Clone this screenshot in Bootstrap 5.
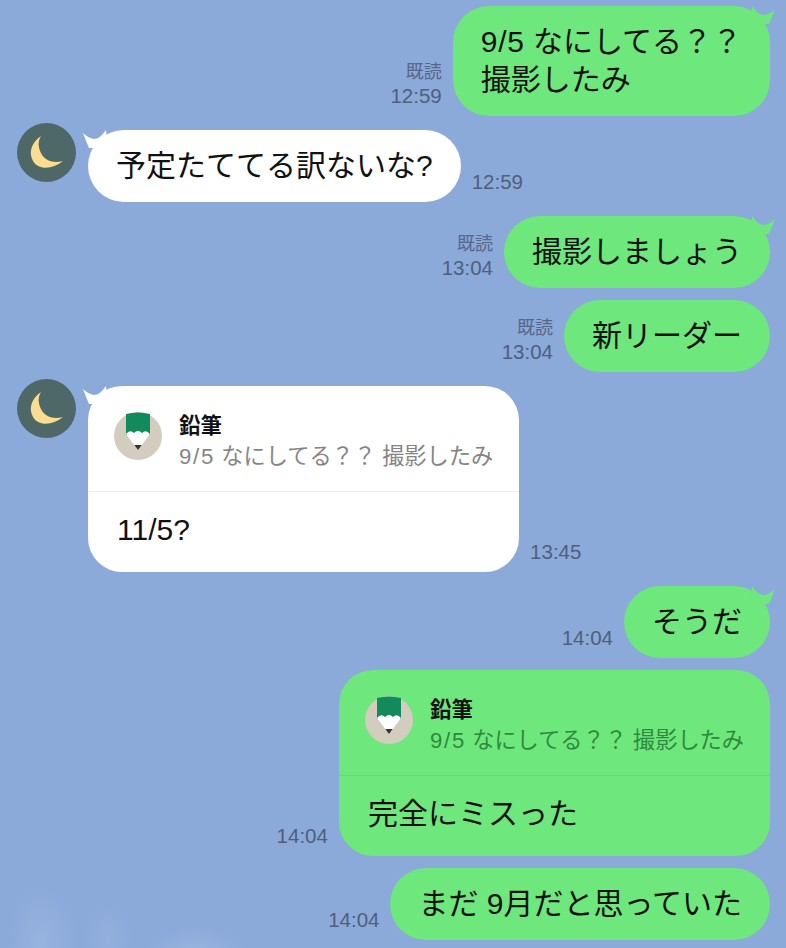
<!DOCTYPE html>
<html lang="ja">
<head>
    <meta charset="UTF-8">
    <title>トーク</title>
    <link href="https://cdn.jsdelivr.net/npm/bootstrap@5.3.3/dist/css/bootstrap.min.css" rel="stylesheet">
    <style>
        html, body {
            height: 100%;
        }
        body {
            overflow: hidden;
            font-family: "Liberation Sans", "Noto Sans CJK JP", sans-serif;
            color: #111;
            background-color: #8ba9d9;
            background-image:
                radial-gradient(ellipse 36px 62px at 42px 945px, rgba(170, 195, 232, .4), transparent),
                radial-gradient(ellipse 24px 40px at 108px 940px, rgba(170, 195, 232, .25), transparent),
                radial-gradient(ellipse 50px 26px at 196px 952px, rgba(170, 195, 232, .4), transparent);
        }
        .chat {
            padding: 6px 16px 0 17px;
        }
        .gap-m { margin-top: 14px; }
        .gap-s { margin-top: 12px; }
        .bubble {
            position: relative;
            padding: 17px 28px;
            border-radius: 36px;
            font-size: 30px;
            line-height: 38px;
            white-space: nowrap;
        }
        .bubble-me { background: #6ee77c; }
        .bubble-them { background: #fff; }
        .num { letter-spacing: .7px; }
        .tail {
            position: absolute;
            top: 0;
            width: 26px;
            height: 22px;
        }
        .bubble-me .tail { right: -6px; fill: #6ee77c; }
        .bubble-them .tail { left: -6px; fill: #fff; }
        .avatar {
            flex: none;
            width: 59px;
            height: 59px;
            margin-top: -7px;
            margin-right: 12px;
        }
        .meta {
            font-size: 20.5px;
            line-height: 24px;
            color: #4f607c;
            text-align: right;
            margin-bottom: 8px;
            white-space: nowrap;
        }
        .meta-left { margin-right: 11px; }
        .meta-right { margin-left: 11px; }
        .seen { font-size: 18px; color: #56678a; }
        .reply-card { padding: 0; border-radius: 34px; }
        .reply-head {
            padding: 26px 26px 0;
            height: 106px;
            border-bottom: 1px solid #eeeeee;
        }
        .bubble-me .reply-head { border-bottom-color: #66da74; }
        .reply-body { padding: 19px 29px 0; height: 80px; }
        .reply-icon { width: 48px; height: 48px; flex: none; margin-right: 17px; }
        .reply-name { font-size: 21.5px; line-height: 26px; font-weight: 700; margin-top: 1px; }
        .reply-text { font-size: 22.2px; line-height: 28px; margin-top: 4px; color: #858585; }
        .reply-text .num { letter-spacing: .08em; }
        .bubble-me .reply-text { color: #2e8a3c; }
    </style>
</head>
<body>
<svg width="0" height="0" class="d-block">
    <defs>
        <g id="moon">
            <circle cx="29.5" cy="29.5" r="29.5" fill="#4e6868"/>
            <path d="M24 13 C15 19 11 29 16 38 C21 47 35 47 46 38 C35 41 27 37 23.5 29 C21 23 21 18 24 13 Z" fill="#fbdd91"/>
        </g>
        <g id="pencil">
            <circle cx="24" cy="24" r="24" fill="#d2cdbe"/>
            <path d="M12 2 Q24 -1 36 2 V23 H12 Z" fill="#128a5c"/>
            <path d="M12 22 Q16 17 20 21 Q24 17 28 21 Q32 17 36 22 L24 38 Z" fill="#fff"/>
            <path d="M20.3 33 H27.7 L24 38 Z" fill="#333"/>
        </g>
        <path id="tail-me" d="M2 0 Q8 9 14 9 Q20 8 25 3 Q22 11 19 18 L0 18 Z"/>
        <path id="tail-them" d="M24 0 Q18 9 12 9 Q6 8 1 3 Q4 11 7 18 L26 18 Z"/>
    </defs>
</svg>

<div class="chat">
    <div class="d-flex justify-content-end align-items-end">
        <div class="meta meta-left"><div class="seen">既読</div>12:59</div>
        <div class="bubble bubble-me">
            <svg class="tail" viewBox="0 0 26 22"><use href="#tail-me"/></svg>
            <span class="num">9/5</span> なにしてる？？<br>撮影したみ
        </div>
    </div>

    <div class="d-flex align-items-start gap-m">
        <svg class="avatar" viewBox="0 0 59 59"><use href="#moon"/></svg>
        <div class="bubble bubble-them">
            <svg class="tail" viewBox="0 0 26 22"><use href="#tail-them"/></svg>
            予定たててる訳ないな?
        </div>
        <div class="meta meta-right align-self-end">12:59</div>
    </div>

    <div class="d-flex justify-content-end align-items-end gap-m">
        <div class="meta meta-left"><div class="seen">既読</div>13:04</div>
        <div class="bubble bubble-me">
            <svg class="tail" viewBox="0 0 26 22"><use href="#tail-me"/></svg>
            撮影しましょう
        </div>
    </div>

    <div class="d-flex justify-content-end align-items-end gap-s">
        <div class="meta meta-left"><div class="seen">既読</div>13:04</div>
        <div class="bubble bubble-me">新リーダー</div>
    </div>

    <div class="d-flex align-items-start gap-m">
        <svg class="avatar" viewBox="0 0 59 59"><use href="#moon"/></svg>
        <div class="bubble bubble-them reply-card">
            <svg class="tail" viewBox="0 0 26 22"><use href="#tail-them"/></svg>
            <div class="reply-head d-flex">
                <svg class="reply-icon" viewBox="0 0 48 48"><use href="#pencil"/></svg>
                <div>
                    <div class="reply-name">鉛筆</div>
                    <div class="reply-text"><span class="num">9/5</span> なにしてる？？ 撮影したみ</div>
                </div>
            </div>
            <div class="reply-body">11/5?</div>
        </div>
        <div class="meta meta-right align-self-end">13:45</div>
    </div>

    <div class="d-flex justify-content-end align-items-end gap-m">
        <div class="meta meta-left">14:04</div>
        <div class="bubble bubble-me">
            <svg class="tail" viewBox="0 0 26 22"><use href="#tail-me"/></svg>
            そうだ
        </div>
    </div>

    <div class="d-flex justify-content-end align-items-end gap-s">
        <div class="meta meta-left">14:04</div>
        <div class="bubble bubble-me reply-card">
            <div class="reply-head d-flex">
                <svg class="reply-icon" viewBox="0 0 48 48"><use href="#pencil"/></svg>
                <div>
                    <div class="reply-name">鉛筆</div>
                    <div class="reply-text"><span class="num">9/5</span> なにしてる？？ 撮影したみ</div>
                </div>
            </div>
            <div class="reply-body">完全にミスった</div>
        </div>
    </div>

    <div class="d-flex justify-content-end align-items-end gap-s">
        <div class="meta meta-left">14:04</div>
        <div class="bubble bubble-me">まだ 9月だと思っていた</div>
    </div>
</div>
<script src="https://cdn.jsdelivr.net/npm/bootstrap@5.3.3/dist/js/bootstrap.bundle.min.js"></script>
</body>
</html>
